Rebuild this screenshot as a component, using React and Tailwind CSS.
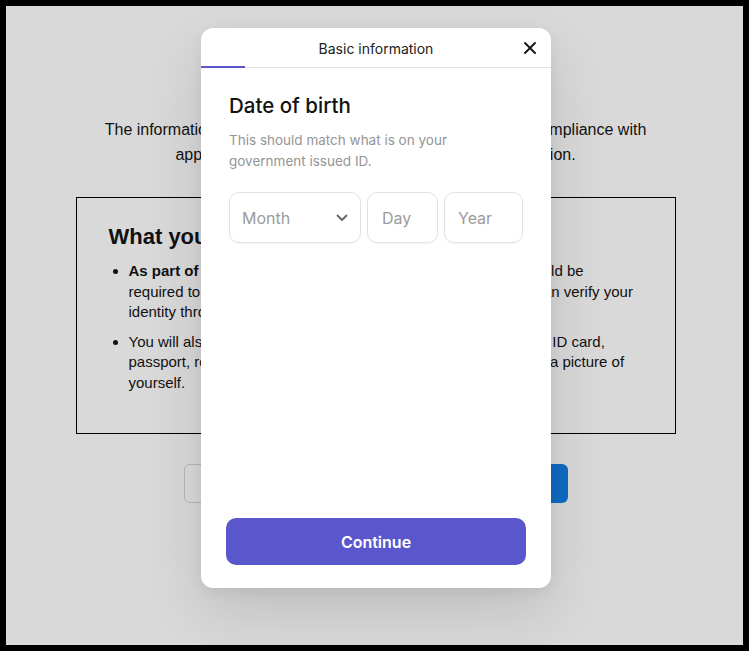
import React from "react";

export default function App() {
  return (
    <div className="w-[749px] h-[651px] bg-black p-[6px]">
      <div className="relative w-full h-full bg-[#d9d9d9] overflow-hidden">
        {/* background page */}
        <div className="flex flex-col items-center pl-[2px] pt-[111px] text-[#111] font-['Liberation_Sans',Arial,sans-serif]">
          <p className="text-center text-[16px] leading-[25px] whitespace-nowrap">
            The information you submit is securely collected and kept in compliance with
            <br />
            applicable anti-money laundering and privacy regulation.
          </p>
          <div className="mt-[30px] w-[600px] h-[237px] border border-black px-[32px] pt-[24px]">
            <h2 className="text-[22px] leading-[30px] font-semibold text-[#111]">What you need to know</h2>
            <ul className="mt-[9px] list-disc pl-[20px] text-[15px] leading-[20.5px] whitespace-nowrap">
              <li>
                <b>As part of the account opening process,</b> some members could be
                <br />
                required to answer a few short security questions, so that we can verify your
                <br />
                identity through our trusted partner.
              </li>
              <li className="mt-[9px]">
                You will also need to provide a current valid government-issued ID card,
                <br />
                passport, residence permit, and/or a driver's license, as well as a picture of
                <br />
                yourself.
              </li>
            </ul>
          </div>
          <div className="mt-[30px] flex gap-[16px]">
            <div className="w-[184px] h-[39px] rounded-[6px] border border-[#b5b5b5] bg-[#dadada]" />
            <div className="w-[184px] h-[39px] rounded-[6px] bg-[#0f6bc3]" />
          </div>
        </div>

        {/* modal */}
        <div className="absolute left-[195px] top-[22px] w-[350px] h-[560px] bg-white rounded-[12px] shadow-[0_24px_60px_rgba(0,0,0,0.12),0_4px_14px_rgba(0,0,0,0.06)] flex flex-col font-['Inter',sans-serif]">
          <div className="relative h-[40px] border-b border-[#e3e3e6] flex items-center justify-center">
            <span className="text-[14px] text-[#222] mt-[1px]">Basic information</span>
            <svg className="absolute right-[15px] top-[14px]" width="12" height="12" viewBox="0 0 12 12">
              <path d="M1 1L11 11M11 1L1 11" stroke="#111" strokeWidth="1.8" strokeLinecap="round" />
            </svg>
            <div className="absolute left-0 bottom-[-1px] w-[44px] h-[2px] bg-[#5a57cc]" />
          </div>
          <div className="flex-1 px-[28px] pt-[24px]">
            <h1 className="text-[20.5px] leading-[28px] font-medium text-[#111]">Date of birth</h1>
            <p className="mt-[10px] text-[13.5px] leading-[21px] text-[#959595]">
              This should match what is on your
              <br />
              government issued ID.
            </p>
            <div className="mt-[20px] flex gap-[6px]">
              <div className="w-[132px] h-[51px] rounded-[10px] border border-[#e2e2e2] flex items-center justify-between pl-[12px] pr-[12px] shadow-[0_1px_2px_rgba(0,0,0,0.04)]">
                <span className="text-[16px] text-[#9b9b9b]">Month</span>
                <svg width="12" height="8" viewBox="0 0 12 8">
                  <path d="M1.5 1.5L6 6L10.5 1.5" fill="none" stroke="#666" strokeWidth="1.8" strokeLinecap="round" strokeLinejoin="round" />
                </svg>
              </div>
              <div className="w-[71px] h-[51px] rounded-[10px] border border-[#e2e2e2] flex items-center pl-[14px] shadow-[0_1px_2px_rgba(0,0,0,0.04)]">
                <span className="text-[16px] text-[#9b9b9b]">Day</span>
              </div>
              <div className="w-[79px] h-[51px] rounded-[10px] border border-[#e2e2e2] flex items-center pl-[13px] shadow-[0_1px_2px_rgba(0,0,0,0.04)]">
                <span className="text-[16px] text-[#9b9b9b]">Year</span>
              </div>
            </div>
          </div>
          <div className="px-[25px] pb-[23px]">
            <button className="w-full h-[47px] rounded-[10px] bg-[#5a57cc] text-white text-[16px] font-semibold">
              Continue
            </button>
          </div>
        </div>
      </div>
    </div>
  );
}
